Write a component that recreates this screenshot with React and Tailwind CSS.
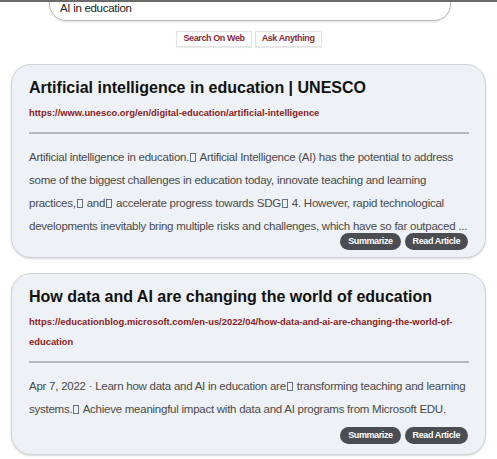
import React from 'react';

const RESULTS = [
  {
    title: 'Artificial intelligence in education | UNESCO',
    url: 'https://www.unesco.org/en/digital-education/artificial-intelligence',
    body: [
      'Artificial intelligence in education.',
      'BOX',
      ' Artificial Intelligence (AI) has the potential to address some of the biggest challenges in education today, innovate teaching and learning practices,',
      'BOX',
      ' and',
      'BOX',
      ' accelerate progress towards SDG',
      'BOX',
      ' 4. However, rapid technological developments inevitably bring multiple risks and challenges, which have so far outpaced ...',
    ],
    actionsClass: '-mt-[5px]',
    padClass: 'pb-[7px]',
  },
  {
    title: 'How data and AI are changing the world of education',
    url: 'https://educationblog.microsoft.com/en-us/2022/04/how-data-and-ai-are-changing-the-world-of-education',
    body: [
      'Apr 7, 2022 · Learn how data and AI in education are',
      'BOX',
      ' transforming teaching and learning systems.',
      'BOX',
      ' Achieve meaningful impact with data and AI programs from Microsoft EDU.',
    ],
    actionsClass: 'mt-[6px]',
    padClass: 'pb-[10px]',
  },
];

// missing-glyph box, as the browser drew it
function Tofu() {
  return <span className="inline-block w-[6px] h-[9px] border border-gray-500 mx-[1px] align-[-1px]" />;
}

function ResultCard({ item }) {
  return (
    <div className={`bg-[#eef1f5] border border-[#cfd3d8] rounded-[20px] pl-[17px] pr-[16px] pt-[12px] shadow-[0_1px_2px_rgba(0,0,0,0.15)] ${item.padClass}`}>
      <h2 className="text-[16px] leading-[22px] font-bold text-[#111]">{item.title}</h2>
      <a className="block mt-[4px] text-[9.4px] leading-[20px] font-bold text-[#8a1c24]">{item.url}</a>
      <div className="h-[2px] bg-[#b4b7bb] mt-[9px]" />
      <p className="mt-[12px] text-[11.5px] tracking-[-0.25px] leading-[23px] text-[#4a4a4a]">
        {item.body.map((part, i) => (part === 'BOX' ? <Tofu key={i} /> : <span key={i}>{part}</span>))}
      </p>
      <div className={`relative flex justify-end gap-[4px] pr-[1px] ${item.actionsClass}`}>
        <button className="bg-[#4b4d52] text-white text-[9px] tracking-[-0.4px] font-bold rounded-full px-[8px] h-[17px] leading-[17px]">Summarize</button>
        <button className="bg-[#4b4d52] text-white text-[9px] tracking-[-0.4px] font-bold rounded-full px-[8px] h-[17px] leading-[17px]">Read Article</button>
      </div>
    </div>
  );
}

export default function App() {
  return (
    <div className="w-[497px] h-[459px] overflow-hidden bg-white border-t-2 border-[#6b6b6b] font-['Liberation_Sans',Arial,sans-serif]">
      <div className="px-[49px] pr-[46px] -mt-[15px]">
        <div className="h-[34px] border border-[#b8b8b8] rounded-full flex items-end pb-[5px] pl-[10px] text-[11.5px] leading-[14px] tracking-[-0.3px] text-[#222] shadow-[0_1px_2px_rgba(0,0,0,0.12)]">
          AI in education
        </div>
      </div>
      <div className="flex justify-center gap-[3px] mt-[10px] ml-[1px]">
        <button className="h-[16px] px-[6px] border border-[#e4e4e4] bg-white text-[9px] tracking-[-0.4px] font-bold text-[#8a2c38] shadow-[0_1px_1px_rgba(0,0,0,0.08)]">Search On Web</button>
        <button className="h-[16px] px-[6px] border border-[#e4e4e4] bg-white text-[9px] tracking-[-0.4px] font-bold text-[#8a2c38] shadow-[0_1px_1px_rgba(0,0,0,0.08)]">Ask Anything</button>
      </div>
      <div className="flex flex-col gap-[15px] px-[11px] mt-[17px]">
        {RESULTS.map((r, i) => (
          <ResultCard key={i} item={r} />
        ))}
      </div>
    </div>
  );
}
